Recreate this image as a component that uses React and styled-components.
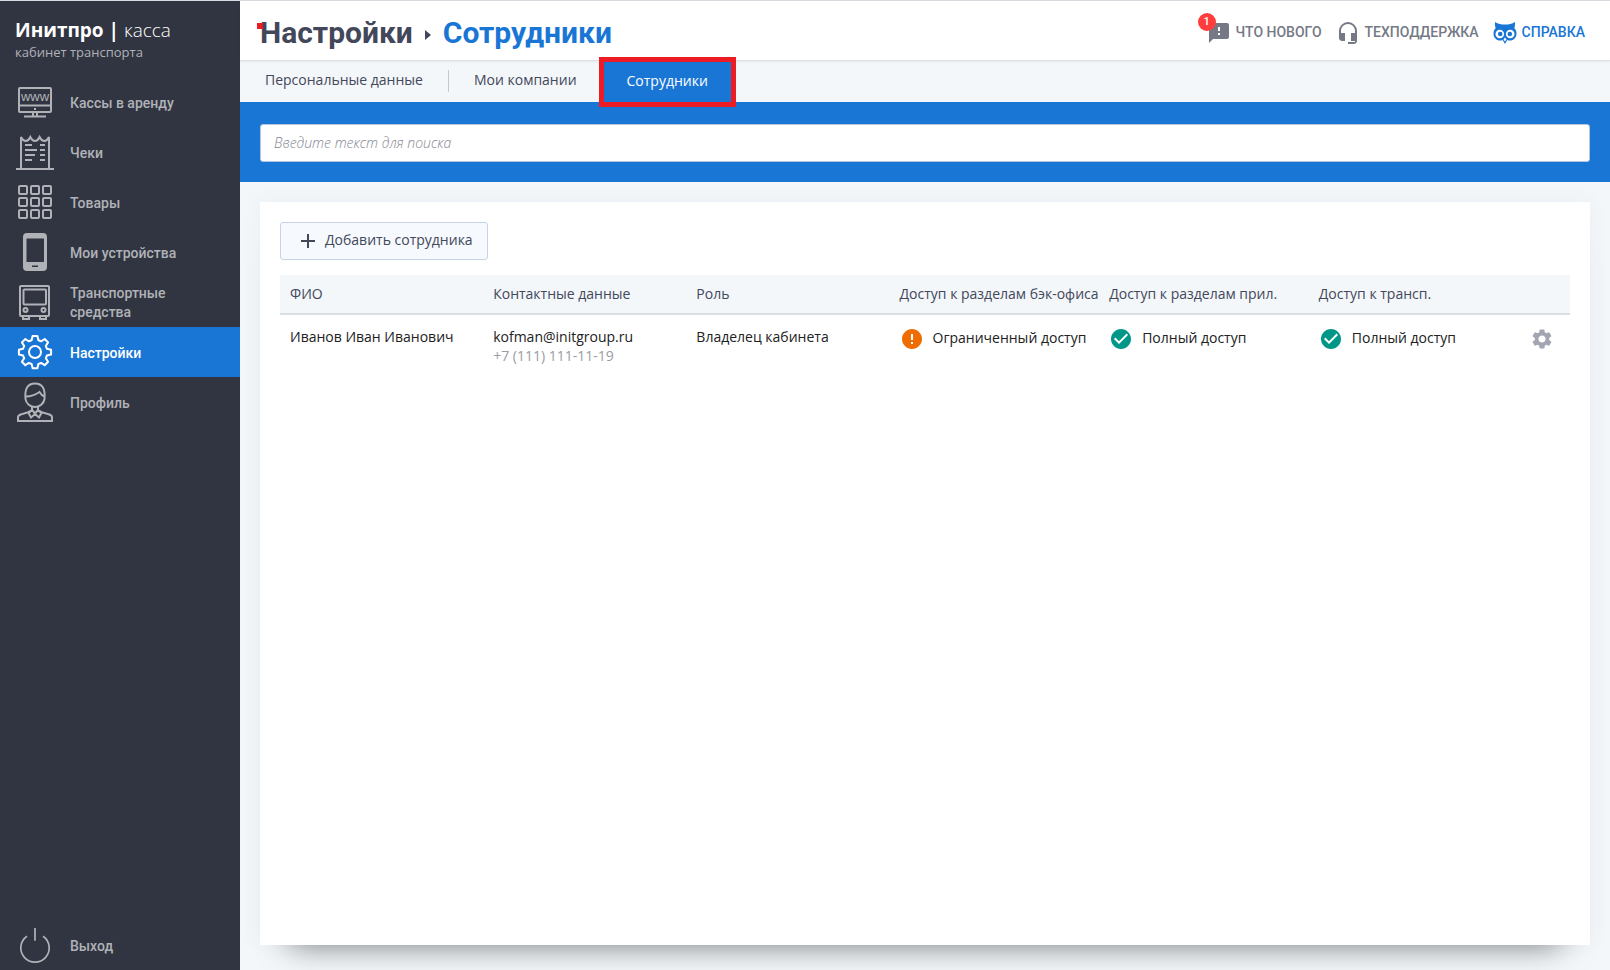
import React, { useState } from "react"
import styled, { createGlobalStyle } from "styled-components"
import {
  MdCheckCircle,
  MdError,
  MdFeedback,
  MdHeadsetMic,
  MdSettings,
} from "react-icons/md"

const GlobalStyle = createGlobalStyle`
  :root {
    --blue: #1976d5;
    --dark: #313541;
    --red: #ed1c24;
    --pale: #f3f7fa;
    --text: #43475a;
    --muted: #757985;
    --white: #ffffff;
  }

  * {
    box-sizing: border-box;
  }

  body {
    margin: 0;
    font-family: "Open Sans", sans-serif;
    font-size: 14px;
    line-height: 19px;
    color: #212121;
    background: var(--pale);
  }

  a {
    color: inherit;
    text-decoration: none;
  }
`

const Page = styled.div`
  display: flex;
  min-height: 100vh;
  border-top: 1px solid #d9dbe0;
`

const Sidebar = styled.aside`
  display: flex;
  flex-direction: column;
  flex-shrink: 0;
  width: 240px;
  background: var(--dark);
`

const Brand = styled.div`
  padding: 17px 15px 15px;
  color: var(--white);
`

const BrandName = styled.div`
  font-size: 19px;
  line-height: 25px;
  font-weight: 300;

  strong {
    font-weight: 700;
  }
`

const BrandNote = styled.div`
  font-size: 13px;
  line-height: 19px;
  color: #b0b2b8;
`

const Menu = styled.nav`
  display: flex;
  flex-direction: column;
  flex: 1;
`

const MenuItem = styled.a`
  display: flex;
  align-items: center;
  gap: 15px;
  height: 50px;
  padding: 0 15px;
  font-family: Roboto, sans-serif;
  font-weight: 500;
  color: ${(props) => (props.$active ? "var(--white)" : "#b0b2b8")};
  background: ${(props) => (props.$active ? "var(--blue)" : "transparent")};

  span {
    max-width: 120px;
    padding-top: 2px;
  }

  &:last-child {
    margin-top: auto;
  }
`

const LineIcon = styled.svg`
  flex-shrink: 0;
  width: 40px;
  height: 40px;
  fill: none;
  stroke: currentColor;
  stroke-width: 2;

  text {
    fill: currentColor;
    stroke: none;
    font-family: "Liberation Sans", sans-serif;
    font-weight: 400;
    font-size: 13px;
  }
`

const Main = styled.div`
  display: flex;
  flex-direction: column;
  flex: 1;
  min-width: 0;
`

const Header = styled.header`
  display: flex;
  justify-content: space-between;
  align-items: center;
  height: 60px;
  padding: 4px 25px 0 20px;
  background: var(--white);
  border-bottom: 1px solid #dfe1e5;
  box-shadow: 0 1px 2px rgba(0, 0, 0, 0.06);
`

const Title = styled.h1`
  position: relative;
  display: flex;
  align-items: center;
  margin: 0;
  font-family: Roboto, sans-serif;
  font-size: 30px;
  line-height: 28px;
  font-weight: 700;
  color: var(--text);
`

const Mark = styled.i`
  position: absolute;
  left: -3px;
  top: 4px;
  width: 6px;
  height: 6px;
  background: var(--red);
`

const Arrow = styled.i`
  margin: 5px 12px 0;
  border: 5px solid transparent;
  border-left: 6px solid var(--text);
  border-right: none;
`

const Current = styled.span`
  color: var(--blue);
`

const Links = styled.div`
  display: flex;
  gap: 14px;
`

const HeaderLink = styled.a`
  position: relative;
  display: flex;
  align-items: center;
  gap: 5px;
  font-family: Roboto, sans-serif;
  font-weight: 500;
  text-transform: uppercase;
  color: ${(props) => (props.$accent ? "var(--blue)" : "var(--muted)")};

  svg {
    width: 24px;
    height: 24px;
  }
`

const Badge = styled.b`
  position: absolute;
  left: -9px;
  top: -8px;
  width: 18px;
  height: 18px;
  border-radius: 50%;
  font-size: 11px;
  line-height: 18px;
  font-weight: 500;
  text-align: center;
  color: var(--white);
  background: #ff3d3d;
`

const Tabs = styled.nav`
  display: flex;
  height: 41px;
`

const Tab = styled.a`
  position: relative;
  display: flex;
  align-items: center;
  padding: ${(props) => (props.$active ? "0 25px 2px" : "0 25px 4px")};
  font-weight: ${(props) => (props.$active ? 500 : 400)};
  color: ${(props) => (props.$active ? "var(--white)" : "var(--text)")};
  background: ${(props) => (props.$active ? "var(--blue)" : "transparent")};
`

const Divider = styled.i`
  width: 1px;
  height: 22px;
  margin-top: 9px;
  background: #c5c8d0;
`

const Highlight = styled.i`
  position: absolute;
  inset: -4px -3px -5px;
  border: 5px solid var(--red);
`

const SearchBar = styled.div`
  padding: 22px 20px 20px;
  background: var(--blue);
`

const SearchInput = styled.input`
  display: block;
  width: 100%;
  height: 38px;
  padding: 0 13px 2px;
  border: 1px solid #b5c5dd;
  border-radius: 3px;
  font: inherit;
  background: var(--white);

  &::placeholder {
    font-style: italic;
    font-weight: 300;
    color: #858892;
    opacity: 1;
  }
`

const Card = styled.section`
  flex: 1;
  margin: 20px 20px 25px;
  padding: 20px;
  background: var(--white);
  box-shadow: 0 0 20px rgba(60, 80, 100, 0.05),
    0 30px 30px -30px rgba(0, 0, 0, 0.5);
`

const AddButton = styled.button`
  display: flex;
  align-items: center;
  gap: 9px;
  height: 38px;
  margin-bottom: 15px;
  padding: 0 14px 0 19px;
  border: 1px solid #c8d3ea;
  border-radius: 3px;
  font: inherit;
  color: var(--text);
  background: #f6f9fe;
  cursor: pointer;

  span {
    padding-bottom: 3px;
  }
`

const Table = styled.table`
  width: 100%;
  table-layout: fixed;
  border-collapse: separate;
  border-spacing: 0;
`

const Col = styled.col`
  width: ${(props) => props.$width};
`

const Th = styled.th`
  height: 40px;
  padding: 0 0 2px 10px;
  border-bottom: 2px solid #dadfe4;
  font-weight: 400;
  text-align: left;
  white-space: nowrap;
  color: var(--text);
  background: var(--pale);
`

const Td = styled.td`
  padding: 12px 0 12px 10px;
  vertical-align: top;
`

const Phone = styled.div`
  color: #9a9ca5;
`

const Access = styled.div`
  display: flex;
  align-items: center;
  gap: 9px;
  height: 24px;
  white-space: nowrap;

  svg {
    width: 24px;
    height: 24px;
    color: ${(props) => (props.$full ? "#009688" : "#ef6c00")};
  }

  span {
    padding-bottom: 3px;
  }
`

const GearButton = styled.button`
  display: flex;
  height: 24px;
  align-items: center;
  margin-left: auto;
  margin-right: 16px;
  padding: 0;
  border: none;
  color: #a3a6b2;
  background: none;
  cursor: pointer;
`

const icons = {
  monitor: (
    <>
      <rect x="4" y="6" width="32" height="24" rx="1" />
      <path d="M4 23.5h32M18 30v4M22 30v4M9 34.5h22M19 27h2" />
      <text x="20" y="19" textAnchor="middle">
        www
      </text>
    </>
  ),
  receipt: (
    <>
      <path d="M6 37V5q2 4 4.700 4t4.600-4q2 4 4.700 4t4.600-4q2 4 4.700 4T34 5v32M1 37h38" />
      <path d="M10 13h7M25 13h5M10 18h12M25 18h5M10 23h10M25 23h5M10 28h7M25 28h5" />
    </>
  ),
  grid: [4, 16, 28].map((y) =>
    [4, 16, 28].map((x) => (
      <rect key={`${x}-${y}`} x={x} y={y} width="8" height="8" rx="1" />
    ))
  ),
  phone: (
    <path
      fill="currentColor"
      stroke="none"
      fillRule="evenodd"
      d="M12 1h16a4 4 0 0 1 4 4v30a4 4 0 0 1-4 4H12a4 4 0 0 1-4-4V5a4 4 0 0 1 4-4zM11.500 6.500v23.500h17.500V6.500zM17 33.500v1.500h6v-1.500z"
    />
  ),
  bus: (
    <>
      <rect x="5" y="4" width="29" height="30" rx="1" />
      <path d="M8 34v3h6v-3M25 34v3h6v-3" />
      <rect x="8.500" y="7.500" width="22.500" height="15" rx="1" />
      <circle cx="10.500" cy="28" r="2" />
      <circle cx="28.500" cy="28" r="2" />
    </>
  ),
  gear: (
    <>
      <path
        strokeLinejoin="round"
        d="M17.600 4h4.800l1 4.200q1.400.4 2.700 1.100l3.600-2.300 3.400 3.400-2.300 3.600q.7 1.300 1.100 2.700l4.200 1v4.800l-4.200 1q-.4 1.400-1.100 2.700l2.300 3.600-3.400 3.400-3.600-2.300q-1.300.7-2.700 1.100l-1 4.200h-4.800l-1-4.200q-1.400-.4-2.700-1.100l-3.600 2.300-3.400-3.400 2.300-3.600q-.7-1.300-1.100-2.700l-4.200-1v-4.800l4.200-1q.4-1.400 1.100-2.700l-2.300-3.600 3.400-3.400 3.600 2.300q1.300-.7 2.700-1.100z"
      />
      <circle cx="20" cy="20" r="6" />
    </>
  ),
  person: (
    <>
      <path d="M10.500 17c-1-10 2-15.500 9.500-15.500S30.500 7 29.500 17c-.6 4.500-5 8-9.500 8s-9-3.500-9.500-8zM11 14.500c6 0 9-1.500 13.500-4.500 1.500 2.500 3 4 5 4.500" />
      <path d="M17 25v3.500l-4.500 2C7 32 3 32.500 3 35v4h34v-4c0-2.500-4-3-9.500-4.500l-4.500-2V25" />
      <path d="M17 28l-3.500 3 2.500 4.500 4-3.500 4 3.500 2.500-4.500-3.500-3M17 28l3 3.500 3-3.500" />
    </>
  ),
  power: (
    <path
      strokeWidth="1.700"
      d="M12 11.200a14.200 14.200 0 1 0 16 0M20 3v12.700"
    />
  ),
}

const menu = [
  { icon: "monitor", name: "Кассы в аренду" },
  { icon: "receipt", name: "Чеки" },
  { icon: "grid", name: "Товары" },
  { icon: "phone", name: "Мои устройства" },
  { icon: "bus", name: "Транспортные средства" },
  { icon: "gear", name: "Настройки", active: true },
  { icon: "person", name: "Профиль" },
  { icon: "power", name: "Выход" },
]

const columns = [
  { name: "ФИО", width: "15.75%" },
  { name: "Контактные данные", width: "15.75%" },
  { name: "Роль", width: "15.75%" },
  { name: "Доступ к разделам бэк-офиса", width: "16.25%" },
  { name: "Доступ к разделам прил.", width: "16.25%" },
  { name: "Доступ к трансп.", width: "auto" },
  { name: "", width: "60px" },
]

const employees = [
  {
    name: "Иванов Иван Иванович",
    email: "kofman@initgroup.ru",
    phone: "+7 (111) 111-11-19",
    role: "Владелец кабинета",
    access: [false, true, true],
  },
]

function Owl() {
  return (
    <svg viewBox="0 0 24 24" fill="currentColor" aria-hidden="true">
      <path d="M2 1c3 2.200 6 2.600 10 2.600S19 3.200 22 1c.2 2.400-.1 4.500-.7 6.300C22.800 8.700 23.500 10.400 23.500 12.500c0 4.300-3 7-6.500 7-1 0-1.900-.2-2.700-.6L12 23l-2.300-4.100c-.8.400-1.700.6-2.700.6-3.500 0-6.500-2.700-6.500-7 0-2.100.7-3.800 2.200-5.200C2.100 5.500 1.800 3.400 2 1z" />
      <circle cx="6.800" cy="13" r="4.300" fill="#fff" />
      <circle cx="17.200" cy="13" r="4.300" fill="#fff" />
      <circle cx="7.200" cy="13" r="2.300" />
      <circle cx="16.800" cy="13" r="2.300" />
      <path d="M12 16.500l1.500 2L12 20.500l-1.500-2z" fill="#fff" />
    </svg>
  )
}

function SideMenu() {
  return (
    <Sidebar>
      <Brand>
        <BrandName>
          <strong>Инитпро |</strong> касса
        </BrandName>
        <BrandNote>кабинет транспорта</BrandNote>
      </Brand>
      <Menu>
        {menu.map((i) => (
          <MenuItem key={i.name} href="#" $active={i.active}>
            <LineIcon viewBox="0 0 40 40" aria-hidden="true">
              {icons[i.icon]}
            </LineIcon>
            <span>{i.name}</span>
          </MenuItem>
        ))}
      </Menu>
    </Sidebar>
  )
}

function TopBar() {
  return (
    <Header>
      <Title>
        Настройки
        <Mark />
        <Arrow />
        <Current>Сотрудники</Current>
      </Title>
      <Links>
        <HeaderLink href="#">
          <MdFeedback />
          <Badge>1</Badge>
          Что нового
        </HeaderLink>
        <HeaderLink href="#">
          <MdHeadsetMic />
          Техподдержка
        </HeaderLink>
        <HeaderLink href="#" $accent>
          <Owl />
          Справка
        </HeaderLink>
      </Links>
    </Header>
  )
}

function EmployeeTable() {
  return (
    <Table>
      <colgroup>
        {columns.map((c) => (
          <Col key={c.name} $width={c.width} />
        ))}
      </colgroup>
      <thead>
        <tr>
          {columns.map((c) => (
            <Th key={c.name}>{c.name}</Th>
          ))}
        </tr>
      </thead>
      <tbody>
        {employees.map((e) => (
          <tr key={e.email}>
            <Td>{e.name}</Td>
            <Td>
              {e.email}
              <Phone>{e.phone}</Phone>
            </Td>
            <Td>{e.role}</Td>
            {e.access.map((full, index) => (
              <Td key={index}>
                <Access $full={full}>
                  {full ? <MdCheckCircle /> : <MdError />}
                  <span>{full ? "Полный доступ" : "Ограниченный доступ"}</span>
                </Access>
              </Td>
            ))}
            <Td>
              <GearButton type="button" aria-label="Настройки">
                <MdSettings size={24} />
              </GearButton>
            </Td>
          </tr>
        ))}
      </tbody>
    </Table>
  )
}

function App() {
  const [query, setQuery] = useState("")

  return (
    <>
      <GlobalStyle />
      <Page>
        <SideMenu />
        <Main>
          <TopBar />
          <Tabs>
            <Tab href="#">Персональные данные</Tab>
            <Divider />
            <Tab href="#">Мои компании</Tab>
            <Tab href="#" $active>
              Сотрудники
              <Highlight />
            </Tab>
          </Tabs>
          <SearchBar>
            <SearchInput
              type="text"
              aria-label="Поиск"
              placeholder="Введите текст для поиска"
              value={query}
              onChange={(e) => setQuery(e.target.value)}
            />
          </SearchBar>
          <Card>
            <AddButton type="button">
              <svg
                width="16"
                height="16"
                stroke="currentColor"
                strokeWidth="2"
                aria-hidden="true"
              >
                <path d="M1 8h14M8 1v14" />
              </svg>
              <span>Добавить сотрудника</span>
            </AddButton>
            <EmployeeTable />
          </Card>
        </Main>
      </Page>
    </>
  )
}

export default App
